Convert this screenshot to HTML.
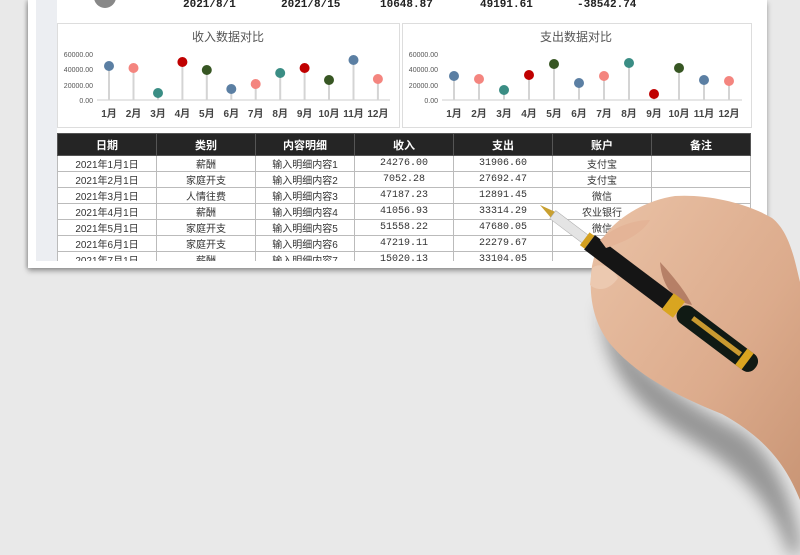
<!DOCTYPE html>
<html><head><meta charset="utf-8"><style>
body{margin:0;width:800px;height:555px;background:#e9e9e9;overflow:hidden;position:relative;font-family:"Liberation Sans","Noto Sans CJK SC",sans-serif}
.paper{position:absolute;left:28px;top:0;width:739px;height:268px;background:#fff;box-shadow:0 3px 5px rgba(0,0,0,.35),-2px 0 3px rgba(0,0,0,.15)}
.strip{position:absolute;left:36px;top:0;width:21px;height:261px;background:#eceef2}
.top{position:absolute;top:-1px;font:bold 11px "Liberation Mono","Noto Sans CJK SC",monospace;color:#222}
.box{position:absolute;top:23px;height:103px;border:1px solid #ddd;background:#fff}
table{position:absolute;left:57px;top:133px;border-collapse:collapse;font:10px "Liberation Sans","Noto Sans CJK SC",sans-serif;color:#333}
td,th{border:1px solid #bbb;height:15px;padding:0;text-align:center;width:98px}
td.n{font:10px "Liberation Mono",monospace}
th{background:#252525;color:#fff;height:21px;font:bold 11px "Noto Sans CJK SC",sans-serif;border-color:#555}
.clip{position:absolute;left:0;top:0;width:800px;height:261px;overflow:hidden}
</style></head><body>
<div class="paper"></div>
<div class="strip"></div>
<div style="position:absolute;left:94px;top:-14px;width:22px;height:22px;border-radius:50%;background:#888"></div>
<div class="top" style="left:183px">2021/8/1</div>
<div class="top" style="left:281px">2021/8/15</div>
<div class="top" style="left:380px">10648.87</div>
<div class="top" style="left:480px">49191.61</div>
<div class="top" style="left:577px">-38542.74</div>
<div class="box" style="left:57px;width:341px"></div>
<div class="box" style="left:402px;width:348px"></div>
<svg width="800" height="130" style="position:absolute;left:0;top:0" font-family="Liberation Sans,Noto Sans CJK SC,sans-serif">
<text x="228" y="41" font-size="12" text-anchor="middle" fill="#555">收入数据对比</text>
<text x="576" y="41" font-size="12" text-anchor="middle" fill="#555">支出数据对比</text>
<g font-size="7" fill="#555" text-anchor="end">
<text x="93" y="57">60000.00</text><text x="93" y="72">40000.00</text><text x="93" y="88">20000.00</text><text x="93" y="103">0.00</text>
<text x="438" y="57">60000.00</text><text x="438" y="72">40000.00</text><text x="438" y="88">20000.00</text><text x="438" y="103">0.00</text>
</g>
<line x1="97" y1="100" x2="390" y2="100" stroke="#ccc"/>
<line x1="442" y1="100" x2="742" y2="100" stroke="#ccc"/>
<g stroke="#d4d4d4" stroke-width="2">
<line x1="109" y1="66" x2="109" y2="100"/><line x1="133.5" y1="68" x2="133.5" y2="100"/><line x1="158" y1="93" x2="158" y2="100"/><line x1="182.4" y1="62" x2="182.4" y2="100"/><line x1="206.8" y1="70" x2="206.8" y2="100"/><line x1="231.3" y1="89" x2="231.3" y2="100"/><line x1="255.7" y1="84" x2="255.7" y2="100"/><line x1="280.2" y1="73" x2="280.2" y2="100"/><line x1="304.6" y1="68" x2="304.6" y2="100"/><line x1="329" y1="80" x2="329" y2="100"/><line x1="353.5" y1="60" x2="353.5" y2="100"/><line x1="377.9" y1="79" x2="377.9" y2="100"/>
<line x1="454" y1="76" x2="454" y2="100"/><line x1="479" y1="79" x2="479" y2="100"/><line x1="504" y1="90" x2="504" y2="100"/><line x1="529" y1="75" x2="529" y2="100"/><line x1="554" y1="64" x2="554" y2="100"/><line x1="579" y1="83" x2="579" y2="100"/><line x1="604" y1="76" x2="604" y2="100"/><line x1="629" y1="63" x2="629" y2="100"/><line x1="654" y1="94" x2="654" y2="100"/><line x1="679" y1="68" x2="679" y2="100"/><line x1="704" y1="80" x2="704" y2="100"/><line x1="729" y1="81" x2="729" y2="100"/>
</g>
<g>
<circle cx="109" cy="66" r="5" fill="#5b7fa3"/><circle cx="133.5" cy="68" r="5" fill="#f4857f"/><circle cx="158" cy="93" r="5" fill="#3a8d84"/><circle cx="182.4" cy="62" r="5" fill="#c00000"/><circle cx="206.8" cy="70" r="5" fill="#375623"/><circle cx="231.3" cy="89" r="5" fill="#5b7fa3"/><circle cx="255.7" cy="84" r="5" fill="#f4857f"/><circle cx="280.2" cy="73" r="5" fill="#3a8d84"/><circle cx="304.6" cy="68" r="5" fill="#c00000"/><circle cx="329" cy="80" r="5" fill="#375623"/><circle cx="353.5" cy="60" r="5" fill="#5b7fa3"/><circle cx="377.9" cy="79" r="5" fill="#f4857f"/>
<circle cx="454" cy="76" r="5" fill="#5b7fa3"/><circle cx="479" cy="79" r="5" fill="#f4857f"/><circle cx="504" cy="90" r="5" fill="#3a8d84"/><circle cx="529" cy="75" r="5" fill="#c00000"/><circle cx="554" cy="64" r="5" fill="#375623"/><circle cx="579" cy="83" r="5" fill="#5b7fa3"/><circle cx="604" cy="76" r="5" fill="#f4857f"/><circle cx="629" cy="63" r="5" fill="#3a8d84"/><circle cx="654" cy="94" r="5" fill="#c00000"/><circle cx="679" cy="68" r="5" fill="#375623"/><circle cx="704" cy="80" r="5" fill="#5b7fa3"/><circle cx="729" cy="81" r="5" fill="#f4857f"/>
</g>
<g font-size="10" font-weight="bold" fill="#444" text-anchor="middle">
<text x="109" y="117">1月</text><text x="133.5" y="117">2月</text><text x="158" y="117">3月</text><text x="182.4" y="117">4月</text><text x="206.8" y="117">5月</text><text x="231.3" y="117">6月</text><text x="255.7" y="117">7月</text><text x="280.2" y="117">8月</text><text x="304.6" y="117">9月</text><text x="329" y="117">10月</text><text x="353.5" y="117">11月</text><text x="377.9" y="117">12月</text>
<text x="454" y="117">1月</text><text x="479" y="117">2月</text><text x="504" y="117">3月</text><text x="529" y="117">4月</text><text x="554" y="117">5月</text><text x="579" y="117">6月</text><text x="604" y="117">7月</text><text x="629" y="117">8月</text><text x="654" y="117">9月</text><text x="679" y="117">10月</text><text x="704" y="117">11月</text><text x="729" y="117">12月</text>
</g>
</svg>
<div class="clip">
<table>
<tr><th>日期</th><th>类别</th><th>内容明细</th><th>收入</th><th>支出</th><th>账户</th><th>备注</th></tr>
<tr><td>2021年1月1日</td><td>薪酬</td><td>输入明细内容1</td><td class="n">24276.00</td><td class="n">31906.60</td><td>支付宝</td><td></td></tr>
<tr><td>2021年2月1日</td><td>家庭开支</td><td>输入明细内容2</td><td class="n">7052.28</td><td class="n">27692.47</td><td>支付宝</td><td></td></tr>
<tr><td>2021年3月1日</td><td>人情往费</td><td>输入明细内容3</td><td class="n">47187.23</td><td class="n">12891.45</td><td>微信</td><td></td></tr>
<tr><td>2021年4月1日</td><td>薪酬</td><td>输入明细内容4</td><td class="n">41056.93</td><td class="n">33314.29</td><td>农业银行</td><td></td></tr>
<tr><td>2021年5月1日</td><td>家庭开支</td><td>输入明细内容5</td><td class="n">51558.22</td><td class="n">47680.05</td><td>微信</td><td></td></tr>
<tr><td>2021年6月1日</td><td>家庭开支</td><td>输入明细内容6</td><td class="n">47219.11</td><td class="n">22279.67</td><td></td><td></td></tr>
<tr><td>2021年7月1日</td><td>薪酬</td><td>输入明细内容7</td><td class="n">15020.13</td><td class="n">33104.05</td><td></td><td></td></tr>
</table></div>
<svg width="800" height="555" style="position:absolute;left:0;top:0">
<defs><filter id="b"><feGaussianBlur stdDeviation="8"/></filter>
<linearGradient id="sk" x1="0" y1="0" x2="1" y2="1"><stop offset="0" stop-color="#eac2a6"/><stop offset=".6" stop-color="#dcab8c"/><stop offset="1" stop-color="#c99575"/></linearGradient></defs>
<path d="M600,300 C620,360 680,400 740,430 C770,450 790,490 800,540 L800,555 L790,555 C770,500 740,470 690,440 C640,410 600,370 600,300Z" fill="#000" opacity=".35" filter="url(#b)"/>
<path d="M605,235 C620,215 648,200 675,196 C705,194 745,202 772,218 C790,232 795,262 800,282 L800,500 C785,462 762,436 722,414 C682,398 640,378 612,346 C593,324 588,295 592,266 C595,252 598,244 605,235Z" fill="url(#sk)"/>
<path d="M660,262 C672,275 686,292 692,305 C676,302 662,288 660,262Z" fill="#8a4a35" opacity=".5"/>
<path d="M592,268 C600,262 612,266 618,278 C610,290 598,292 590,285Z" fill="#ecc9b0"/>
<g transform="translate(540,205) rotate(37)">
<polygon points="0,0 18,-4 18,4" fill="#c9a030"/>
<rect x="16" y="-5" width="42" height="10" fill="#e4e4e4" stroke="#aaa" stroke-width=".5"/>
<rect x="56" y="-8" width="6" height="16" fill="#d4a020"/>
<rect x="62" y="-9" width="100" height="18" fill="#151515"/>
<rect x="160" y="-10" width="14" height="20" fill="#d9a520"/>
<rect x="174" y="-10" width="96" height="20" rx="9" fill="#101a14"/>
<rect x="190" y="-4" width="60" height="5" fill="#c99a30"/>
<rect x="252" y="-10" width="8" height="20" fill="#d9a520"/>
</g>
<path d="M600,240 C612,228 632,220 650,220 C642,234 624,242 606,248Z" fill="#e4b497"/>
</svg>
</body></html>
